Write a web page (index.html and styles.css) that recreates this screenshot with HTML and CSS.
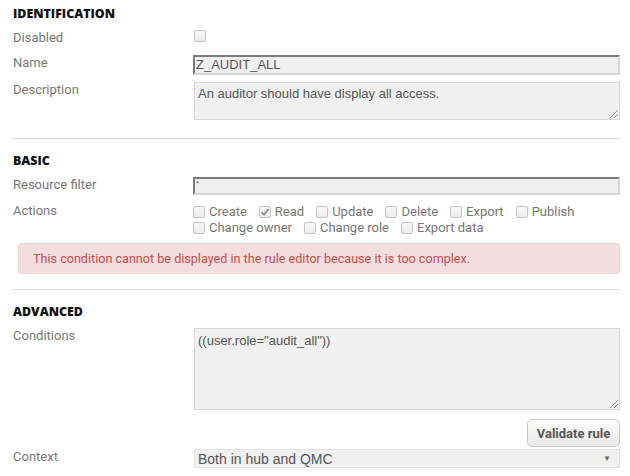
FILE: index.html
```html
<!DOCTYPE html>
<html>
<head>
<meta charset="utf-8">
<link rel="stylesheet" href="styles.css">
</head>
<body>
<div class="page">
  <section class="group">
    <h2 class="heading">IDENTIFICATION</h2>
    <div class="row r-disabled">
      <label class="label">Disabled</label>
      <div class="field"><span class="cb"></span></div>
    </div>
    <div class="row r-name">
      <label class="label">Name</label>
      <div class="field"><div class="input inset">Z_AUDIT_ALL</div></div>
    </div>
    <div class="row">
      <label class="label">Description</label>
      <div class="field"><div class="area desc">An auditor should have display all access.<span class="grip"></span></div></div>
    </div>
  </section>
  <hr class="divider first">
  <section class="group">
    <h2 class="heading">BASIC</h2>
    <div class="row r-filter">
      <label class="label">Resource filter</label>
      <div class="field"><div class="input inset small">*</div></div>
    </div>
    <div class="row">
      <label class="label">Actions</label>
      <div class="field actions">
        <span class="opt"><span class="cb"></span>Create</span>
        <span class="opt"><span class="cb checked"><svg viewBox="0 0 12 12" width="12" height="12"><path d="M2.6 6.3 L5 8.6 L9.6 3" fill="none" stroke="#8a8a8a" stroke-width="1.8"/></svg></span>Read</span>
        <span class="opt"><span class="cb"></span>Update</span>
        <span class="opt"><span class="cb"></span>Delete</span>
        <span class="opt"><span class="cb"></span>Export</span>
        <span class="opt"><span class="cb"></span>Publish</span>
        <span class="opt"><span class="cb"></span>Change owner</span>
        <span class="opt"><span class="cb"></span>Change role</span>
        <span class="opt"><span class="cb"></span>Export data</span>
      </div>
    </div>
    <div class="alert">This condition cannot be displayed in the rule editor because it is too complex.</div>
  </section>
  <hr class="divider second">
  <section class="group">
    <h2 class="heading">ADVANCED</h2>
    <div class="row">
      <label class="label">Conditions</label>
      <div class="field"><div class="area cond">((user.role="audit_all"))<span class="grip"></span></div></div>
    </div>
    <div class="btnrow"><button class="btn">Validate rule</button></div>
    <div class="row">
      <label class="label">Context</label>
      <div class="field"><div class="select"><span>Both in hub and QMC</span><span class="arrow">▼</span></div></div>
    </div>
  </section>
</div>
</body>
</html>
```

FILE: styles.css
```css
* { box-sizing: border-box; }
html, body { margin: 0; padding: 0; background: #fff; }
body { font-family: Roboto, "Liberation Sans", sans-serif; color: #777; }
.page { padding: 6px 10px 0 13px; width: 630px; }
.heading {
  margin: 0 0 8px 0;
  font-family: "Open Sans", Roboto, sans-serif;
  font-weight: 800;
  font-size: 12.4px;
  line-height: 16px;
  color: #111;
}
.row { display: grid; grid-template-columns: 180px 1fr; }
.r-disabled { margin-bottom: 10px; }
.r-name { margin-bottom: 7px; }
.r-filter { margin-bottom: 8px; }
.label { font-size: 13px; line-height: 15px; color: #777; }
.field { min-width: 0; }
.cb {
  display: inline-block;
  flex: none;
  width: 12px; height: 12px;
  border: 1px solid #c6c6c6;
  border-radius: 2px;
  background: linear-gradient(#f8f8f8, #ececec);
  position: relative;
}
.cb svg { position: absolute; left: -1px; top: -1px; }
.field > .cb { display: block; margin-left: 1px; }
.input {
  height: 20px;
  background: #f0f0f0;
  font-family: "Liberation Sans", Arial, sans-serif;
  font-size: 13px;
  color: #555;
  line-height: 16px;
  padding: 0 1px;
}
.inset {
  border-top: 2px solid #7b7b7b;
  border-left: 2px solid #7b7b7b;
  border-right: 2px solid #d6d6d6;
  border-bottom: 2px solid #d6d6d6;
}
.input.small { font-size: 8px; line-height: 10px; height: 18px; color: #666; }
.area {
  position: relative;
  background: #f0f0f0;
  border: 1px solid #d9d9d9;
  font-family: "Liberation Sans", Arial, sans-serif;
  font-size: 13px;
  color: #555;
  line-height: 16px;
  padding: 3px 3px;
  margin-left: 1px;
}
.desc { height: 38px; }
.cond { height: 82px; padding-top: 4px; }
.grip {
  position: absolute; right: 1px; bottom: 1px;
  width: 8px; height: 8px;
  background: linear-gradient(135deg, transparent 0 45%, #999 45% 52%, transparent 52% 70%, #999 70% 77%, transparent 77%);
}
.divider { border: 0; border-top: 1px solid #ddd; margin: 0 0 0 -1px; }
.divider.first { margin-top: 18px; margin-bottom: 14px; }
.divider.second { margin-top: 15px; margin-bottom: 14px; }
.actions { display: flex; flex-wrap: wrap; width: 410px; font-size: 13px; line-height: 16px; color: #777; column-gap: 12px; margin-top: 1px; }
.opt { display: inline-flex; align-items: center; gap: 4px; white-space: nowrap; }
.alert {
  margin: 7px 0 0 5px;
  background: #f2dede;
  border: 1px solid #ecd5d5;
  border-radius: 3px;
  color: #c0504d;
  font-size: 12.6px;
  line-height: 17px;
  padding: 6px 14px;
  height: 31px;
}
.btnrow { display: flex; justify-content: flex-end; margin-top: 9px; margin-bottom: 2px; }
.btn {
  font-family: Roboto, "Liberation Sans", sans-serif;
  font-weight: 700;
  font-size: 13px;
  color: #555;
  background: linear-gradient(#fcfcfc, #e9e9e9);
  border: 1px solid #c8c8c8;
  border-radius: 5px;
  height: 28px;
  width: 93px;
  padding: 0;
}
.select {
  display: flex; justify-content: space-between; align-items: center;
  height: 19px;
  background: #f0f0f0;
  border: 1px solid #e2e2e2;
  font-family: "Liberation Sans", Arial, sans-serif;
  font-size: 14px;
  color: #555;
  padding: 0 8px 0 3px;
  margin-left: 1px;
}
.arrow { font-size: 8px; color: #666; }
```
